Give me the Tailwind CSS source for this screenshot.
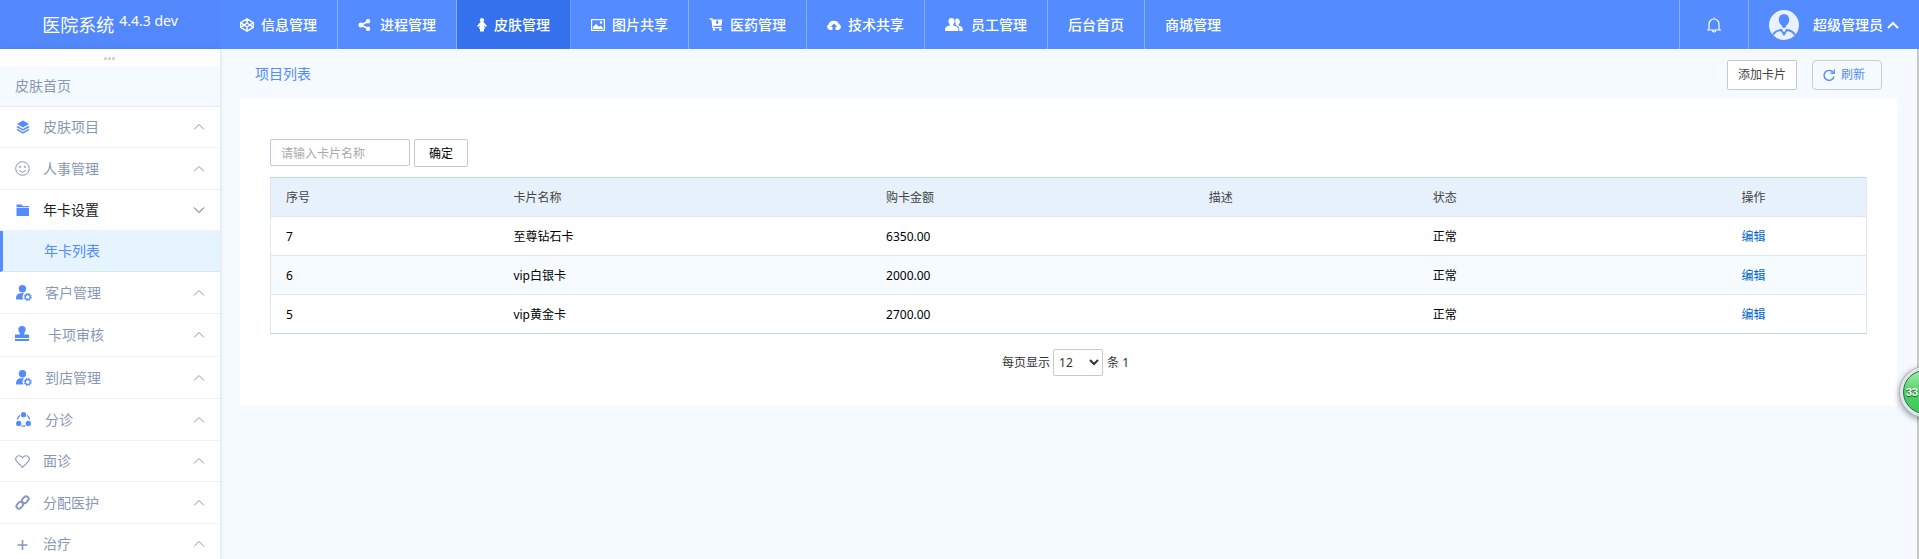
<!DOCTYPE html>
<html lang="zh-CN">
<head>
<meta charset="utf-8">
<meta name="viewport" content="width=device-width, initial-scale=1">
<title>医院系统 - 年卡列表</title>
<script src="https://cdn.jsdelivr.net/npm/@tailwindcss/browser@4"></script>
</head>
<body class="flex h-screen flex-col overflow-hidden bg-[#f4faff] font-['Noto_Sans','Noto_Sans_CJK_SC',sans-serif] text-xs text-black">
<svg class="hidden" aria-hidden="true">
  <symbol id="up" viewBox="0 0 12 8"><path d="M1 6.500 6 1.500 11 6.500" fill="none" stroke="currentColor"/></symbol>
  <symbol id="down" viewBox="0 0 12 8"><path d="M1 1.500 6 6.500 11 1.500" fill="none" stroke="currentColor"/></symbol>
  <symbol id="user-gear" viewBox="0 0 16 16"><circle cx="6.500" cy="3.800" r="3.700" fill="currentColor"/><path d="M0 14.500V13c0-3 2-4.800 5-4.800h3.200A5 5 0 0 0 7.400 14.500z" fill="currentColor"/><circle cx="11.800" cy="12" r="2.500" fill="none" stroke="currentColor" stroke-width="1.300"/><circle cx="11.800" cy="12" r="3.600" fill="none" stroke="currentColor" stroke-width="1" stroke-dasharray="1.500 1.330"/></symbol>
</svg>

<header class="flex h-[49px] shrink-0 bg-[#548bff] text-sm text-white">
  <div class="flex w-[220px] shrink-0 items-center justify-center gap-[5px] bg-[#5288fb]">
    <span class="text-lg">医院系统</span><span class="pb-2 text-sm">4.4.3 dev</span>
  </div>
  <nav class="flex font-medium" aria-label="主导航">
    <a href="#" class="flex items-center gap-[7px] border-r border-white/30 px-5">
      <svg class="w-[14px]" viewBox="0 0 14 14" fill="none" stroke="currentColor" stroke-width="1.400" stroke-linejoin="round"><path d="M7 .8 13.300 4.600v4.800L7 13.200.700 9.400V4.600zM.700 4.600 7 9l6.300-4.400M.700 9.400 7 5l6.300 4.400M7 .8V5M7 9v4.200"/></svg>信息管理</a>
    <a href="#" class="flex items-center gap-[7px] border-r border-white/30 px-5">
      <svg class="w-[15px]" viewBox="0 0 15 14" fill="currentColor"><path d="M3 7 10 3.500M3 7l7 3.500" stroke="currentColor" stroke-width="1.500"/><circle cx="3" cy="7" r="2.500"/><circle cx="10" cy="3.300" r="2.200"/><circle cx="10" cy="10.700" r="2.200"/></svg>进程管理</a>
    <a href="#" aria-current="page" class="flex items-center gap-[7px] border-r border-white/30 bg-[#3571ed] px-5">
      <svg class="w-[10px]" viewBox="0 0 10 14" fill="currentColor"><circle cx="5" cy="2.200" r="2.100"/><path d="M3.500 4h3L10 8l-1.200 1L7 7.500l1.200 3.200H7V13.500H3v-2.800H1.800L3 7.500 1.200 9 0 8z"/></svg>皮肤管理</a>
    <a href="#" class="flex items-center gap-[7px] border-r border-white/30 px-5">
      <svg class="w-[14px]" viewBox="0 0 14 12"><rect x=".6" y=".6" width="12.800" height="10.800" fill="none" stroke="currentColor" stroke-width="1.200"/><path d="M2 10V8l3-3 3 2.800L9.500 6.500 12 9v1z" fill="currentColor"/><circle cx="10" cy="3.500" r="1.200" fill="currentColor"/></svg>图片共享</a>
    <a href="#" class="flex items-center gap-[7px] border-r border-white/30 px-5">
      <svg class="w-[14px]" viewBox="0 0 14 13" fill="currentColor"><path d="M.500 1H3l1 8.700h8.500" fill="none" stroke="currentColor" stroke-width="1.300"/><path fill-rule="evenodd" d="M3 1.600H13.300L12.500 7.800H4zM7.400 2.200v2H6.200L8.200 6.300l2-2.100H9V2.200z"/><circle cx="5" cy="11.600" r="1.300"/><circle cx="11.300" cy="11.600" r="1.300"/></svg>医药管理</a>
    <a href="#" class="flex items-center gap-[7px] border-r border-white/30 px-5">
      <svg class="w-[14px]" viewBox="0 0 14 12" fill="currentColor"><path d="M4 11H3A3 3 0 0 1 1.500 5.500 5.500 5 0 0 1 12 5 3.200 3.200 0 0 1 11.500 11H8.500V8h1.800L7 4.500 3.700 8h1.800v3z"/></svg>技术共享</a>
    <a href="#" class="flex items-center gap-[7px] border-r border-white/30 px-5">
      <svg class="w-[19px]" viewBox="1 0 19 14" fill="currentColor"><path d="M7.500 0a3 3.300 0 0 1 1.800 6v1.600c2.500.8 5 1.400 5 3.600V13H1v-1.800c0-2.200 2.300-2.800 4.700-3.600V6A3 3.300 0 0 1 7.500 0"/><path d="M11 1.200a3 3 0 0 1 3.500 5v1.300c2.300.8 4.200 1.500 4.200 3.500v2h-3.500v-2c0-2-1.500-3-3.400-3.700z"/></svg>员工管理</a>
    <a href="#" class="flex items-center border-r border-white/30 px-5">后台首页</a>
    <a href="#" class="flex items-center px-5">商城管理</a>
  </nav>
  <div class="ml-auto flex">
    <button type="button" aria-label="通知" class="flex w-[69px] items-center justify-center border-l border-white/30">
      <svg class="w-4" viewBox="0 0 16 16" fill="none" stroke="currentColor" stroke-width="1.200"><path d="M1 13h14M3 13V7a5 5 0 0 1 10 0v6M8 .500V2"/><path d="M6.300 13.300a1.700 1.700 0 0 0 3.400 0"/></svg>
    </button>
    <button type="button" class="flex items-center border-l border-white/30 px-5 font-medium">
      <svg class="mr-[14px] w-[30px]" viewBox="0 0 30 30"><circle cx="15" cy="15" r="15" fill="#e9f0ff"/><path d="M15 4.300c3.300 0 5.200 2.200 5.200 5.400 0 2.400-1.400 4.800-3.200 6 0 1.500-1 2.200-2 2.200s-2-.7-2-2.200c-1.800-1.200-3.200-3.600-3.200-6 0-3.200 1.900-5.400 5.200-5.400" fill="#548bff"/><path d="M4 25C5.500 22 9 20.300 12.300 20L15 24.500l2.700-4.500C21 20.300 24.500 22 26 25" fill="none" stroke="#548bff" stroke-width="1.800"/></svg>
      超级管理员
      <svg class="ml-1 w-3" viewBox="0 0 12 8" fill="none" stroke="currentColor" stroke-width="2"><path d="M1 7 6 2l5 5"/></svg>
    </button>
  </div>
</header>

<div class="flex min-h-0 flex-1">
  <aside class="w-[220px] shrink-0 overflow-hidden bg-white text-sm text-[#8797b5] shadow-[1px_0_3px_rgba(0,0,0,0.1)]">
    <div class="flex h-[17px] items-center justify-center gap-px pt-0.5 pr-0.5">
      <i class="size-[3px] rounded-full bg-[#ccc]"></i><i class="size-[3px] rounded-full bg-[#ccc]"></i><i class="size-[3px] rounded-full bg-[#ccc]"></i>
    </div>
    <nav aria-label="侧边栏">
      <a href="#" class="flex h-[41px] items-center border-b border-[#e4ebf0] bg-[#f4faff] px-[15px]">皮肤首页</a>
      <a href="#" class="flex h-[41px] items-center border-b border-[#f0f0f0] px-[15px]">
        <span class="w-7 text-[#548bff]"><svg class="w-4" viewBox="0 0 16 16"><path d="M8 1.500 14 5 8 8.500 2 5z" fill="currentColor"/><path d="M2 7.500 8 11l6-3.500M2 10.300 8 13.800l6-3.500" fill="none" stroke="currentColor" stroke-width="1.500"/></svg></span>皮肤项目<svg class="ml-auto h-2 w-3"><use href="#up"/></svg></a>
      <a href="#" class="flex h-[42px] items-center border-b border-[#f0f0f0] px-[15px]">
        <span class="w-7"><svg class="w-[15px]" viewBox="0 0 15 15" fill="none" stroke="currentColor"><circle cx="7.500" cy="7.500" r="6.800"/><path d="M4.500 9a3.200 3.200 0 0 0 6 0"/><path d="M5 5v1.800M10 5v1.800" stroke-width="1.500"/></svg></span>人事管理<svg class="ml-auto h-2 w-3"><use href="#up"/></svg></a>
      <a href="#" class="flex h-[41px] items-center border-b border-[#f0f0f0] px-[15px] text-[#222]">
        <span class="w-7 text-[#548bff]"><svg class="w-[15px]" viewBox="0 0 15 14" fill="currentColor"><path d="M1.500 1.500h5L8 3h6v1.300H1.500zM1.500 5H14v8H1.500z"/></svg></span>年卡设置<svg class="ml-auto h-2 w-3 text-[#555]"><use href="#down"/></svg></a>
      <a href="#" aria-current="page" class="flex h-[41px] items-center border-b border-l-[3px] border-b-[#d9e6f0] border-l-[#548bff] bg-[#e6f4ff] pl-[41px] text-[#548bff]">年卡列表</a>
      <a href="#" class="flex h-[42px] items-center border-b border-[#f0f0f0] px-[15px]">
        <span class="w-[30px] text-[#548bff]"><svg class="ml-px size-4"><use href="#user-gear"/></svg></span>客户管理<svg class="ml-auto h-2 w-3"><use href="#up"/></svg></a>
      <a href="#" class="flex h-[43px] items-center border-b border-[#f0f0f0] px-[15px]">
        <span class="w-[33px] pb-1 text-[#548bff]"><svg class="w-[14px]" viewBox="0 0 14 15" fill="currentColor"><path d="M7 0a3.700 3.700 0 0 1 3.700 3.700C10.700 5.500 9 6.500 9 8.500h5V12H0V8.500h5c0-2-1.700-3-1.700-4.800A3.700 3.700 0 0 1 7 0"/><path d="M0 13h14v2H0z"/></svg></span>卡项审核<svg class="ml-auto h-2 w-3"><use href="#up"/></svg></a>
      <a href="#" class="flex h-[42px] items-center border-b border-[#f0f0f0] px-[15px]">
        <span class="w-[30px] text-[#548bff]"><svg class="ml-px size-4"><use href="#user-gear"/></svg></span>到店管理<svg class="ml-auto h-2 w-3"><use href="#up"/></svg></a>
      <a href="#" class="flex h-[42px] items-center border-b border-[#f0f0f0] px-[15px]">
        <span class="w-[30px] text-[#548bff]"><svg class="ml-px w-[15px]" viewBox="0 0 15 15" fill="currentColor"><circle cx="7.500" cy="2.700" r="2.600"/><circle cx="2.700" cy="11.400" r="2.600"/><circle cx="12.300" cy="11.400" r="2.600"/><path d="M4 3.200A6 6 0 0 0 1.500 7.500M11 3.200a6 6 0 0 1 2.500 4.300M5.500 13.800a6 6 0 0 0 4 0" fill="none" stroke="currentColor" stroke-width="1.300"/></svg></span>分诊<svg class="ml-auto h-2 w-3"><use href="#up"/></svg></a>
      <a href="#" class="flex h-[41px] items-center border-b border-[#f0f0f0] px-[15px]">
        <span class="w-7"><svg class="w-[15px]" viewBox="0 0 15 13" fill="none" stroke="currentColor" stroke-width="1.100"><path d="M7.500 12.300 1.600 6.300C-.500 3.500 1.500.700 4 .700c1.600 0 2.800.9 3.500 2.100C8.200 1.600 9.400.700 11 .700c2.500 0 4.500 2.800 2.400 5.600z"/></svg></span>面诊<svg class="ml-auto h-2 w-3"><use href="#up"/></svg></a>
      <a href="#" class="flex h-[42px] items-center border-b border-[#f0f0f0] px-[15px]">
        <span class="w-7"><svg class="w-[15px]" viewBox="0 0 15 15" fill="none" stroke="currentColor" stroke-width="1.900"><rect x="-3.700" y="-2.500" width="7.400" height="5" rx="2.500" transform="translate(10.300 4.700) rotate(-48)"/><rect x="-3.700" y="-2.500" width="7.400" height="5" rx="2.500" transform="translate(4.700 10.300) rotate(-48)"/></svg></span>分配医护<svg class="ml-auto h-2 w-3"><use href="#up"/></svg></a>
      <a href="#" class="flex h-[41px] items-center border-b border-[#f0f0f0] px-[15px]">
        <span class="w-7"><svg class="w-[15px]" viewBox="0 0 15 15" fill="none" stroke="currentColor" stroke-width="1.600"><path d="M2.500 8h10M7.500 3v10"/></svg></span>治疗<svg class="ml-auto h-2 w-3"><use href="#up"/></svg></a>
    </nav>
  </aside>

  <main class="min-w-0 flex-1 border-r-2 border-[#c8c8c8] px-5">
    <div class="flex h-[50px] items-center px-[15px]">
      <h1 class="text-sm text-[#548bff]">项目列表</h1>
      <div class="ml-auto flex gap-[15px] pt-0.5">
        <button type="button" class="h-[30px] w-[70px] rounded-xs border border-[#c8c8c8] bg-white text-[#444]">添加卡片</button>
        <button type="button" class="flex h-[30px] w-[70px] items-center gap-[6px] rounded border border-[#c8cdd2] pl-[10px] text-[#548bff]">
          <svg class="w-3" viewBox="0 0 12 12" fill="none" stroke="currentColor" stroke-width="1.400"><path d="M10 3.200A5 5 0 1 0 11 7.500"/><path d="M11.200.500v3.700H7.500"/></svg>刷新</button>
      </div>
    </div>
    <section class="bg-white px-[30px] pt-10 pb-[30px]">
      <form class="flex items-start gap-1">
        <input type="text" aria-label="卡片名称" placeholder="请输入卡片名称" class="h-[27px] w-[140px] rounded-xs border border-[#c2c8d8] px-[10px] pt-0.5 placeholder:text-[#aaa]">
        <button type="button" class="h-7 w-[54px] rounded-xs border border-[#c2c8d8] bg-white pt-0.5">确定</button>
      </form>
      <table class="mt-[10px] w-full table-fixed border-collapse border border-[#e2e6ea] border-y-[#b9d9f2] text-left [&_td]:pt-0.5 [&_th]:pt-0.5">
        <colgroup><col class="w-[14.280%]"><col class="w-[23.350%]"><col class="w-[20.220%]"><col class="w-[14.030%]"><col class="w-[19.350%]"><col></colgroup>
        <thead>
          <tr class="h-[39px] bg-[#e6f1fb] text-[#444]">
            <th class="pl-[15px] font-normal">序号</th><th class="pl-[15px] font-normal">卡片名称</th><th class="pl-[15px] font-normal">购卡金额</th><th class="pl-[15px] font-normal">描述</th><th class="pl-[15px] font-normal">状态</th><th class="pl-[15px] font-normal">操作</th>
          </tr>
        </thead>
        <tbody>
          <tr class="h-[39px] border-t border-t-[#e2e6ea]"><td class="pl-[15px]">7</td><td class="pl-[15px]">至尊钻石卡</td><td class="pl-[15px]">6350.00</td><td></td><td class="pl-[15px]">正常</td><td class="pl-[15px]"><a href="#" class="text-[#0066cc]">编辑</a></td></tr>
          <tr class="h-[39px] border-t border-t-[#e2e6ea] bg-[#f5fbff]"><td class="pl-[15px]">6</td><td class="pl-[15px]">vip白银卡</td><td class="pl-[15px]">2000.00</td><td></td><td class="pl-[15px]">正常</td><td class="pl-[15px]"><a href="#" class="text-[#0066cc]">编辑</a></td></tr>
          <tr class="h-[39px] border-t border-t-[#e2e6ea]"><td class="pl-[15px]">5</td><td class="pl-[15px]">vip黄金卡</td><td class="pl-[15px]">2700.00</td><td></td><td class="pl-[15px]">正常</td><td class="pl-[15px]"><a href="#" class="text-[#0066cc]">编辑</a></td></tr>
        </tbody>
      </table>
      <div class="mt-[15px] flex items-center justify-center pr-[6px] text-[#333]">
        <label for="size">每页显示</label>
        <select id="size" class="mr-1 ml-[3px] h-[27px] w-[50px] rounded-xs border border-[#c2c8d8] bg-white pl-px"><option>12</option><option>24</option></select>
        <span>条 1</span>
      </div>
    </section>
  </main>
</div>

<button type="button" class="fixed top-[367px] -right-[31px] size-[50px] rounded-full border-3 border-[#e4e4e8] bg-[#e4e4e8] shadow-[0_0_0_1px_#b4b4b8,0_2px_7px_rgba(0,0,0,0.5)]">
  <span class="flex size-full items-center rounded-full border border-[#0f7a4c] bg-linear-to-b from-[#a0ecaa] via-[#4fd067] to-[#3fc95a] pl-[2px] font-['Liberation_Sans',sans-serif] text-[11px] font-bold text-white text-shadow-[0_1px_1px_rgba(0,0,0,0.6)]">33</span>
</button>
</body>
</html>
